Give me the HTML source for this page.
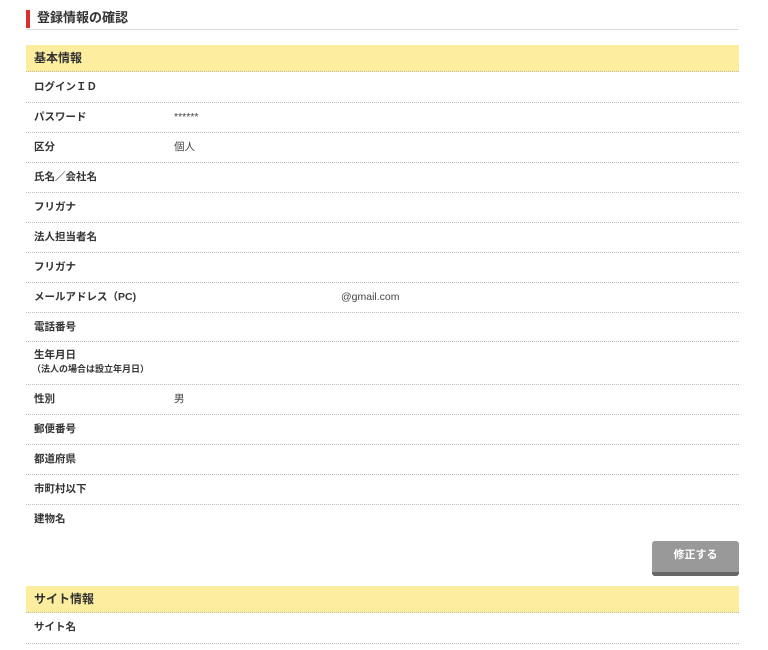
<!DOCTYPE html>
<html><head><meta charset="utf-8"><style>
body{margin:0;background:#fff;font-family:"Liberation Sans","Noto Sans CJK JP",sans-serif;color:#333;width:768px;height:650px;overflow:hidden;position:relative}
.t{position:absolute;left:26px;top:9px;width:713px;height:20px;border-bottom:1px solid #ddd}
.t i{position:absolute;left:0;top:1px;width:4px;height:18px;background:#d9302b}
.t span{position:absolute;left:11px;top:0;font-size:13px;font-weight:bold;line-height:18px;color:#333}
.h{position:absolute;left:26px;width:713px;height:27px;background:#fdee9f;border-bottom:1px dotted #bbb;font-size:12px;font-weight:bold;line-height:26px;box-sizing:border-box;padding-left:8px}
.r{position:absolute;left:26px;width:713px;border-bottom:1px dotted #bbb;font-size:10.5px;box-sizing:border-box}
.r b,.r s{position:absolute;top:0;line-height:28px;height:28px}
.r b{left:8px;font-weight:bold}
.r s{left:148px;text-decoration:none;color:#444}
.btn{position:absolute;left:652px;top:541px;width:87px;height:31px;background:#999;border-radius:3px;border-bottom:4px solid #666;color:#fff;font-size:11px;font-weight:bold;text-align:center;line-height:28px}
</style></head><body>
<div class="t"><i></i><span>登録情報の確認</span></div>
<div class="h" style="top:45px">基本情報</div>
<div class="r" style="top:73px;height:30px"><b>ログインＩＤ</b></div>
<div class="r" style="top:103px;height:30px"><b>パスワード</b><s>******</s></div>
<div class="r" style="top:133px;height:30px"><b>区分</b><s>個人</s></div>
<div class="r" style="top:163px;height:30px"><b>氏名／会社名</b></div>
<div class="r" style="top:193px;height:30px"><b>フリガナ</b></div>
<div class="r" style="top:223px;height:30px"><b>法人担当者名</b></div>
<div class="r" style="top:253px;height:30px"><b>フリガナ</b></div>
<div class="r" style="top:283px;height:30px"><b>メールアドレス（PC)</b><s style="left:315px">@gmail.com</s></div>
<div class="r" style="top:313px;height:29px"><b>電話番号</b></div>
<div class="r" style="top:342px;height:43px"><b style="top:0;line-height:26px">生年月日</b><b style="top:19px;line-height:16px;font-size:9px;left:6px">（法人の場合は設立年月日）</b></div>
<div class="r" style="top:385px;height:30px"><b>性別</b><s>男</s></div>
<div class="r" style="top:415px;height:30px"><b>郵便番号</b></div>
<div class="r" style="top:445px;height:30px"><b>都道府県</b></div>
<div class="r" style="top:475px;height:30px"><b>市町村以下</b></div>
<div class="r" style="top:505px;height:30px;border:none"><b>建物名</b></div>
<div class="btn">修正する</div>
<div class="h" style="top:586px">サイト情報</div>
<div class="r" style="top:613px;height:31px"><b>サイト名</b></div>
</body></html>
